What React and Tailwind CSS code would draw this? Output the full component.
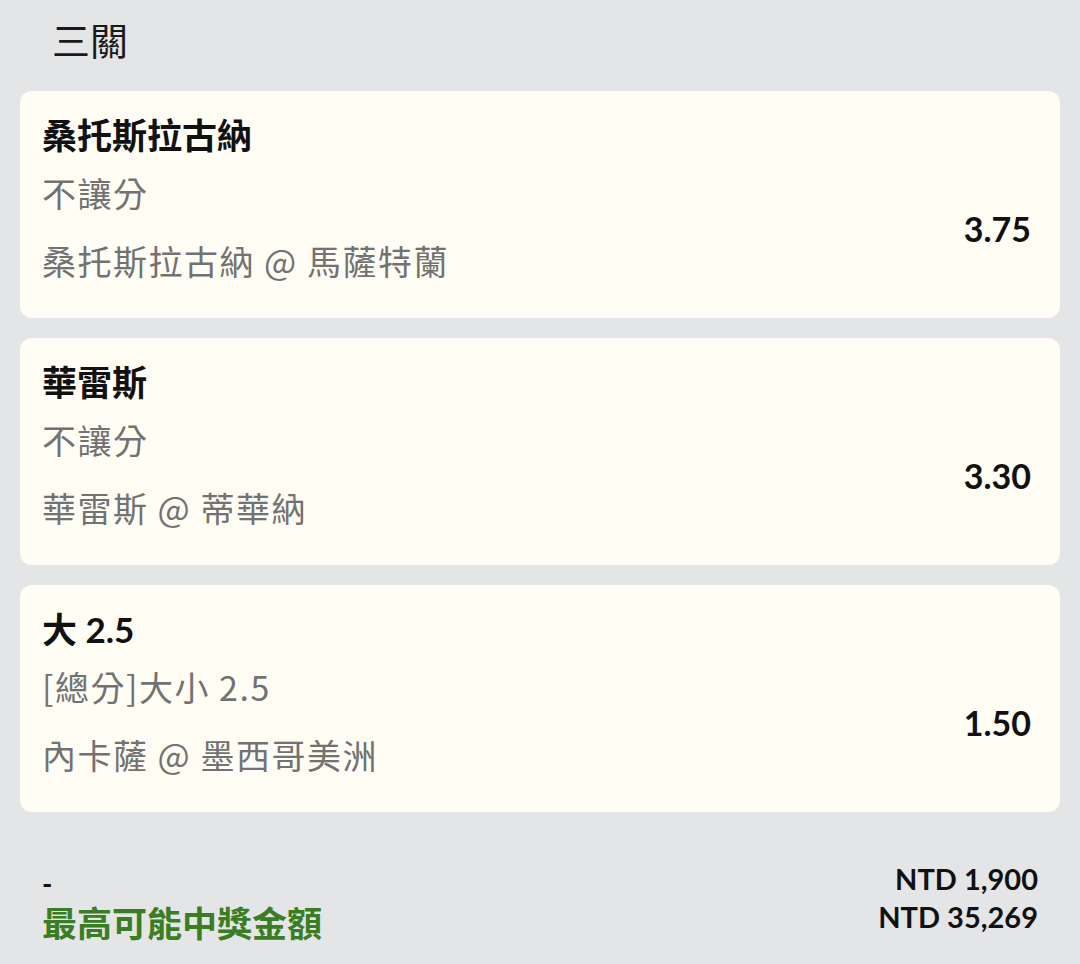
import React from "react";

const bets = [
  { title: "桑托斯拉古納", market: "不讓分", match: "桑托斯拉古納 @ 馬薩特蘭", odds: "3.75" },
  { title: "華雷斯", market: "不讓分", match: "華雷斯 @ 蒂華納", odds: "3.30" },
  { title: "大 2.5", market: "[總分]大小 2.5", match: "內卡薩 @ 墨西哥美洲", odds: "1.50" },
];

export default function App() {
  return (
    <div className="w-[1080px] h-[964px] bg-[#e4e5e7] overflow-hidden font-['Noto_Sans_CJK_TC',sans-serif]">
      <div className="pl-[52px] pt-[14px] h-[91px] text-[38px] leading-[50px] text-[#1a1a1a]">三關</div>
      <div className="flex flex-col gap-[20px] px-[20px]">
        {bets.map((b) => (
          <div key={b.odds} className="h-[227px] rounded-[12px] bg-[#fffdf4] flex items-start justify-between pl-[22px] pr-[29px] pt-[22px]">
            <div className="flex flex-col">
              <div className="text-[35px] leading-[44px] font-bold text-[#111] font-['Lato','Noto_Sans_CJK_TC',sans-serif]">{b.title}</div>
              <div className="mt-[14px] text-[34px] leading-[44px] tracking-[1.5px] text-[#727272]">{b.market}</div>
              <div className="mt-[24px] text-[34px] leading-[44px] tracking-[1.5px] text-[#727272]">{b.match}</div>
            </div>
            <div className="mt-[94px] text-[34px] leading-[44px] font-bold text-[#111] font-['Lato','Noto_Sans_CJK_TC',sans-serif]">{b.odds}</div>
          </div>
        ))}
      </div>
      <div className="flex justify-between items-end px-[42px] pt-[48px] font-['Lato','Noto_Sans_CJK_TC',sans-serif] font-bold">
        <div className="flex flex-col">
          <div className="text-[28px] leading-[36px] text-[#111]">-</div>
          <div className="text-[35px] leading-[44px] text-[#3b7d22]">最高可能中獎金額</div>
        </div>
        <div className="flex flex-col items-end pb-[9px]">
          <div className="text-[29px] leading-[38px] text-[#111]">NTD 1,900</div>
          <div className="text-[29px] leading-[38px] text-[#111]">NTD 35,269</div>
        </div>
      </div>
    </div>
  );
}
